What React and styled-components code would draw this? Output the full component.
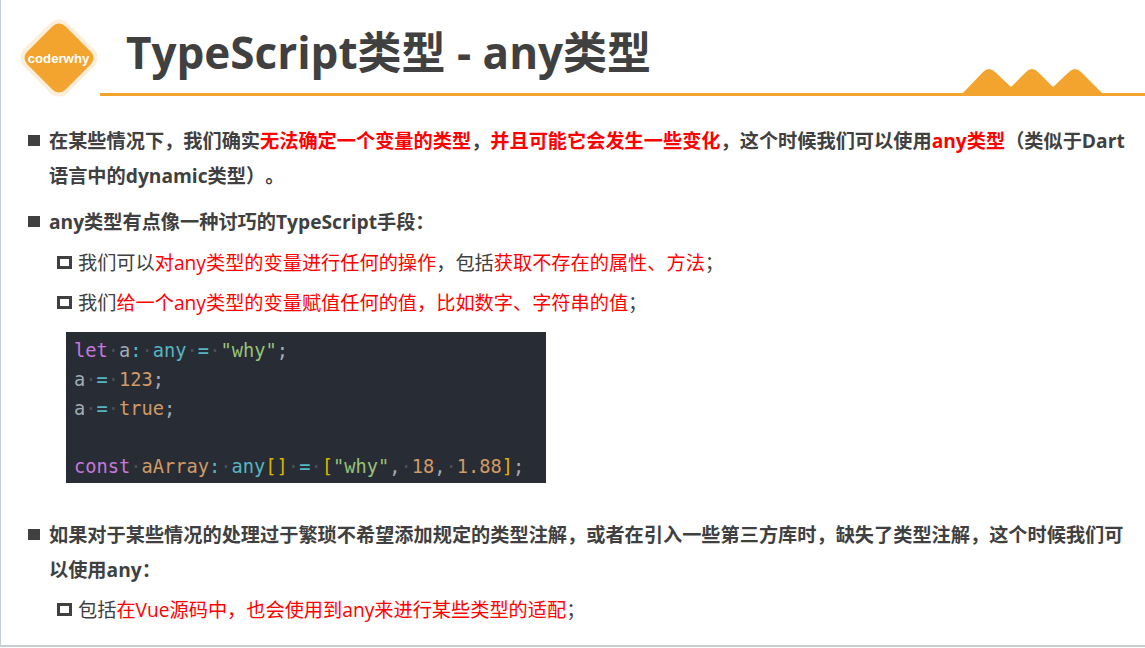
import React from "react";
import styled, { createGlobalStyle } from "styled-components";

const GlobalStyle = createGlobalStyle`
  html, body {
    margin: 0;
    padding: 0;
    background: #ffffff;
  }
`;

const Slide = styled.div`
  box-sizing: border-box;
  width: 1145px;
  height: 647px;
  overflow: hidden;
  background: #ffffff;
  border-left: 1px solid #c5ced3;
  border-bottom: 2px solid #c5ced3;
  font-family: "Open Sans", "Noto Sans CJK SC", sans-serif;
  color: #404040;
  text-spacing-trim: space-all;
`;

const Header = styled.header`
  position: relative;
  height: 96px;
  padding-left: 99px;
  display: flex;
`;

const Logo = styled.div`
  position: absolute;
  left: 31px;
  top: 31px;
  width: 54px;
  height: 54px;
  box-sizing: border-box;
  display: flex;
  align-items: center;
  justify-content: center;
  background: #f2a42e;
  border-radius: 9px;
  box-shadow: 0 0 0 4px #fdeeda;
  transform: rotate(45deg);
`;

const LogoText = styled.span`
  transform: rotate(-45deg);
  font-family: "Liberation Sans", sans-serif;
  font-weight: 700;
  font-size: 13.2px;
  color: #ffffff;
`;

const TitleBar = styled.div`
  flex: 1;
  border-bottom: 3px solid #f2a42e;
  padding: 11px 0 0 26px;
`;

const Title = styled.h1`
  margin: 0;
  font-size: 44px;
  font-weight: 700;
  line-height: 82px;
  color: #404040;
  white-space: nowrap;
`;

const Peaks = styled.svg`
  position: absolute;
  left: 960px;
  top: 68px;
`;

const Content = styled.main`
  padding: 27px 0 0 27px;
`;

const Item = styled.div`
  display: flex;
  align-items: flex-start;
  margin-top: ${(p) => p.$top || 0}px;
  font-size: 19.2px;
  font-weight: ${(p) => (p.$sub ? 400 : 700)};
  line-height: 35px;
  padding-left: ${(p) => (p.$sub ? 29 : 0)}px;
`;

const SolidBullet = styled.span`
  flex: none;
  width: 12px;
  height: 11px;
  margin: 12px 9px 0 0;
  background: #404040;
`;

const HollowBullet = styled.span`
  flex: none;
  box-sizing: border-box;
  width: 15px;
  height: 13px;
  margin: 11px 6px 0 0;
  border: 3px solid #404040;
`;

const Text = styled.div`
  width: ${(p) => p.$width || "auto"};
  white-space: ${(p) => (p.$wrap ? "normal" : "nowrap")};
`;

const Red = styled.span`
  color: #ff0000;
`;

const CodeBlock = styled.pre`
  box-sizing: border-box;
  width: 480px;
  height: 151px;
  margin: 12px 0 0 38px;
  padding: 4px 0 0 8px;
  background: #282c34;
  font-family: "DejaVu Sans Mono", monospace;
  font-size: 18.7px;
  line-height: 29px;
  color: #a4abb8;
`;

const Token = styled.span`
  color: ${(p) => p.$color};
`;

const Dot = styled.span`
  color: #4b5059;
`;

const PURPLE = "#c678dd";
const CYAN = "#56b6c2";
const GREEN = "#98c379";
const ORANGE = "#d19a66";
const GOLD = "#dcb400";

const Sp = () => <Dot>·</Dot>;

const App = () => {
  return (
    <Slide>
      <GlobalStyle />
      <Header>
        <Logo>
          <LogoText>coderwhy</LogoText>
        </Logo>
        <TitleBar>
          <Title>TypeScript类型 - any类型</Title>
        </TitleBar>
        <Peaks width="143" height="28" viewBox="0 0 143 28">
          <path
            d="M1 26 L22 4 Q28 -2 34 4 L50 19 L65 4 Q71 -2 77 4 L92 19 L108 4 Q114 -2 120 4 L142 26 Z"
            fill="#f2a42e"
          />
        </Peaks>
      </Header>

      <Content>
        <Item>
          <SolidBullet />
          <Text $wrap $width="1080px">
            在某些情况下，我们确实<Red>无法确定一个变量的类型</Red>，<Red>并且可能它会发生一些变化</Red>，这个时候我们可以使用<Red>any类型</Red>（类似于Dart语言中的dynamic类型）。
          </Text>
        </Item>
        <Item $top={11}>
          <SolidBullet />
          <Text>any类型有点像一种讨巧的TypeScript手段：</Text>
        </Item>
        <Item $sub $top={6}>
          <HollowBullet />
          <Text>
            我们可以<Red>对any类型的变量进行任何的操作</Red>，包括<Red>获取不存在的属性、方法</Red>；
          </Text>
        </Item>
        <Item $sub $top={5}>
          <HollowBullet />
          <Text>
            我们<Red>给一个any类型的变量赋值任何的值，比如数字、字符串的值</Red>；
          </Text>
        </Item>
        <CodeBlock>
          <Token $color={PURPLE}>let</Token><Sp />a<Token $color={CYAN}>:</Token><Sp /><Token $color={CYAN}>any</Token><Sp /><Token $color={CYAN}>=</Token><Sp /><Token $color={GREEN}>"why"</Token>;{"\n"}
          a<Sp /><Token $color={CYAN}>=</Token><Sp /><Token $color={ORANGE}>123</Token>;{"\n"}
          a<Sp /><Token $color={CYAN}>=</Token><Sp /><Token $color={ORANGE}>true</Token>;{"\n"}
          {"\n"}
          <Token $color={PURPLE}>const</Token><Sp /><Token $color={ORANGE}>aArray</Token><Token $color={CYAN}>:</Token><Sp /><Token $color={CYAN}>any</Token><Token $color={GOLD}>[]</Token><Sp /><Token $color={CYAN}>=</Token><Sp /><Token $color={GOLD}>[</Token><Token $color={GREEN}>"why"</Token>,<Sp /><Token $color={ORANGE}>18</Token>,<Sp /><Token $color={ORANGE}>1.88</Token><Token $color={GOLD}>]</Token>;
        </CodeBlock>
        <Item $top={34}>
          <SolidBullet />
          <Text $wrap $width="1080px">
            如果对于某些情况的处理过于繁琐不希望添加规定的类型注解，或者在引入一些第三方库时，缺失了类型注解，这个时候我们可以使用any：
          </Text>
        </Item>
        <Item $sub $top={5}>
          <HollowBullet />
          <Text>
            包括<Red>在Vue源码中，也会使用到any来进行某些类型的适配</Red>；
          </Text>
        </Item>
      </Content>
    </Slide>
  );
};

export default App;
